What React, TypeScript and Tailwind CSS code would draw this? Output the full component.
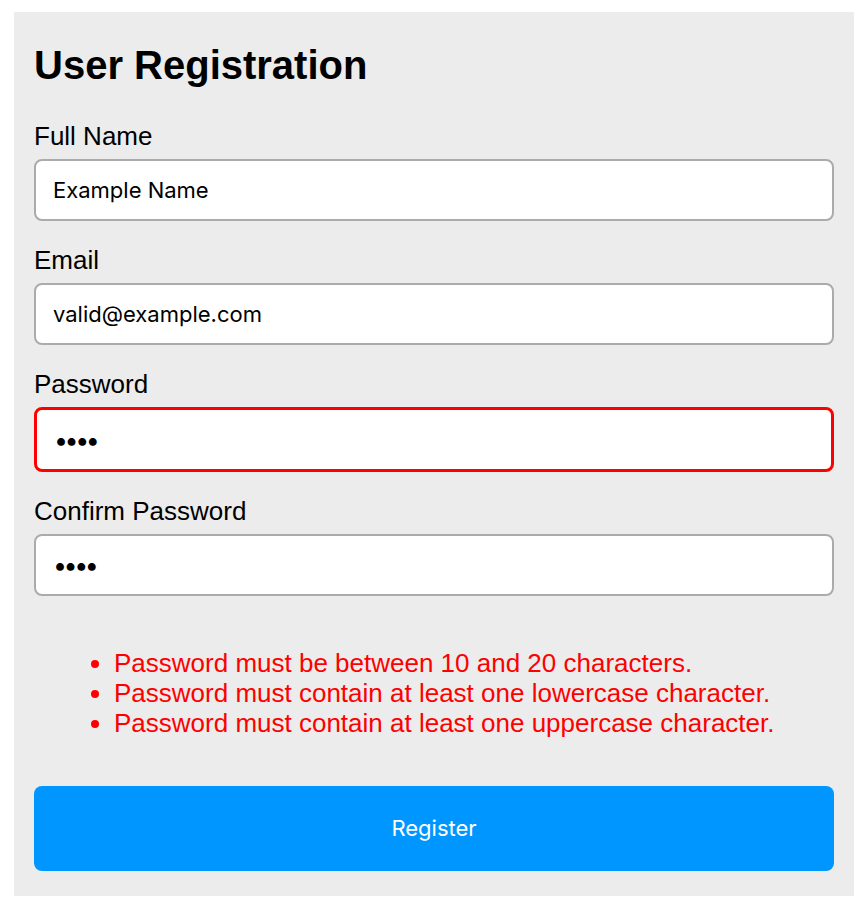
import React from "react";

const labelCls =
  "block text-[26px] leading-[30px] text-black [font-family:'Liberation_Sans',Arial,sans-serif]";
const inputBase =
  "block w-full bg-white rounded-[8px] pl-[17px] pr-4 text-[22px] text-black outline-none [font-family:Inter,'Liberation_Sans',sans-serif]";

export default function App() {
  return (
    <div className="min-h-[908px] w-[868px] bg-white pt-[12px] pl-[14px]">
      <div className="w-[840px] bg-[#ececec] px-5 pt-5 pb-[25px]">
        <h1 className="mt-[10px] text-[40px] leading-[46px] font-bold text-black [font-family:'Liberation_Sans',Arial,sans-serif]">
          User Registration
        </h1>

        <div className="mt-[33px] flex flex-col gap-6">
          <div className="flex flex-col gap-2">
            <label className={labelCls}>Full Name</label>
            <input
              readOnly
              type="text"
              value="Example Name"
              className={inputBase + " h-[62px] border-2 border-[#ababab]"}
            />
          </div>
          <div className="flex flex-col gap-2">
            <label className={labelCls}>Email</label>
            <input
              readOnly
              type="text"
              value="valid@example.com"
              className={inputBase + " h-[62px] border-2 border-[#ababab]"}
            />
          </div>
          <div className="flex flex-col gap-2">
            <label className={labelCls}>Password</label>
            <input
              readOnly
              type="password"
              value="abcd"
              className={inputBase + " h-[65px] border-[3px] border-[#ff0000] pl-[17px] text-[25px] tracking-[-3.5px]"}
            />
          </div>
          <div className="flex flex-col gap-2">
            <label className={labelCls}>Confirm Password</label>
            <input
              readOnly
              type="password"
              value="abcd"
              className={inputBase + " h-[62px] border-2 border-[#ababab] text-[25px] tracking-[-3.5px]"}
            />
          </div>
        </div>

        <ul className="mt-[52px] list-disc pl-[80px] text-[26px] leading-[30px] text-[#ff0000] [font-family:'Liberation_Sans',Arial,sans-serif]">
          <li>Password must be between 10 and 20 characters.</li>
          <li>Password must contain at least one lowercase character.</li>
          <li>Password must contain at least one uppercase character.</li>
        </ul>

        <button className="mt-[48px] flex h-[85px] w-full items-center justify-center rounded-[8px] bg-[#0096ff] text-[22px] text-white [font-family:Inter,'Liberation_Sans',sans-serif]">
          Register
        </button>
      </div>
    </div>
  );
}
